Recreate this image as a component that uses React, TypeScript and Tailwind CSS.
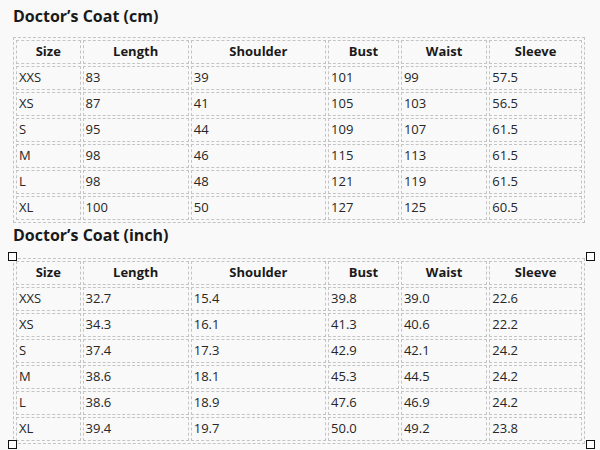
import React from "react";

type Row = [string, string, string, string, string, string];

const headers = ["Size", "Length", "Shoulder", "Bust", "Waist", "Sleeve"];
const widths = ["w-[62px]", "w-[102px]", "w-[130px]", "w-[68px]", "w-[83px]", "w-[89px]"];

const cm: Row[] = [
  ["XXS", "83", "39", "101", "99", "57.5"],
  ["XS", "87", "41", "105", "103", "56.5"],
  ["S", "95", "44", "109", "107", "61.5"],
  ["M", "98", "46", "115", "113", "61.5"],
  ["L", "98", "48", "121", "119", "61.5"],
  ["XL", "100", "50", "127", "125", "60.5"],
];

const inch: Row[] = [
  ["XXS", "32.7", "15.4", "39.8", "39.0", "22.6"],
  ["XS", "34.3", "16.1", "41.3", "40.6", "22.2"],
  ["S", "37.4", "17.3", "42.9", "42.1", "24.2"],
  ["M", "38.6", "18.1", "45.3", "44.5", "24.2"],
  ["L", "38.6", "18.9", "47.6", "46.9", "24.2"],
  ["XL", "39.4", "19.7", "50.0", "49.2", "23.8"],
];

const SizeTable = ({ rows }: { rows: Row[] }) => (
  <table className="table-fixed w-[572px] border-separate border-spacing-[2px] border border-dashed border-[#c4c4c4] text-[13px] text-[#262626]">
    <thead>
      <tr>
        {headers.map((h, i) => (
          <th
            key={h}
            className={`${widths[i]} h-[24px] p-0 border border-dashed border-[#c4c4c4] font-bold text-center text-[#1a1a1a]`}
          >
            {h}
          </th>
        ))}
      </tr>
    </thead>
    <tbody>
      {rows.map((r) => (
        <tr key={r[0]}>
          {r.map((c, i) => (
            <td
              key={i}
              className="h-[24px] py-0 pl-[2px] pr-0 border border-dashed border-[#c4c4c4] text-left"
            >
              {c}
            </td>
          ))}
        </tr>
      ))}
    </tbody>
  </table>
);

const Handle = ({ pos }: { pos: string }) => (
  <div className={`absolute w-[9px] h-[9px] bg-white border border-[#111] ${pos}`} />
);

const App = () => {
  return (
    <div
      className="w-[600px] h-[450px] overflow-hidden bg-[#f9f9f9] pl-[13px]"
      style={{ fontFamily: '"Open Sans", "Noto Sans", sans-serif' }}
    >
      <h2 className="pt-[5px] h-[37px] text-[16px] leading-[22px] font-bold text-[#1a1a1a]">
        Doctor’s Coat (cm)
      </h2>
      <SizeTable rows={cm} />
      <h2 className="pt-[1px] h-[35px] text-[16px] leading-[22px] font-bold text-[#1a1a1a]">
        Doctor’s Coat (inch)
      </h2>
      <div className="relative w-[572px]">
        <SizeTable rows={inch} />
        <Handle pos="left-[-5px] top-[-6px]" />
        <Handle pos="left-[573px] top-[-6px]" />
        <Handle pos="left-[-5px] bottom-[-5px]" />
        <Handle pos="left-[573px] bottom-[-5px]" />
      </div>
    </div>
  );
};

export default App;
